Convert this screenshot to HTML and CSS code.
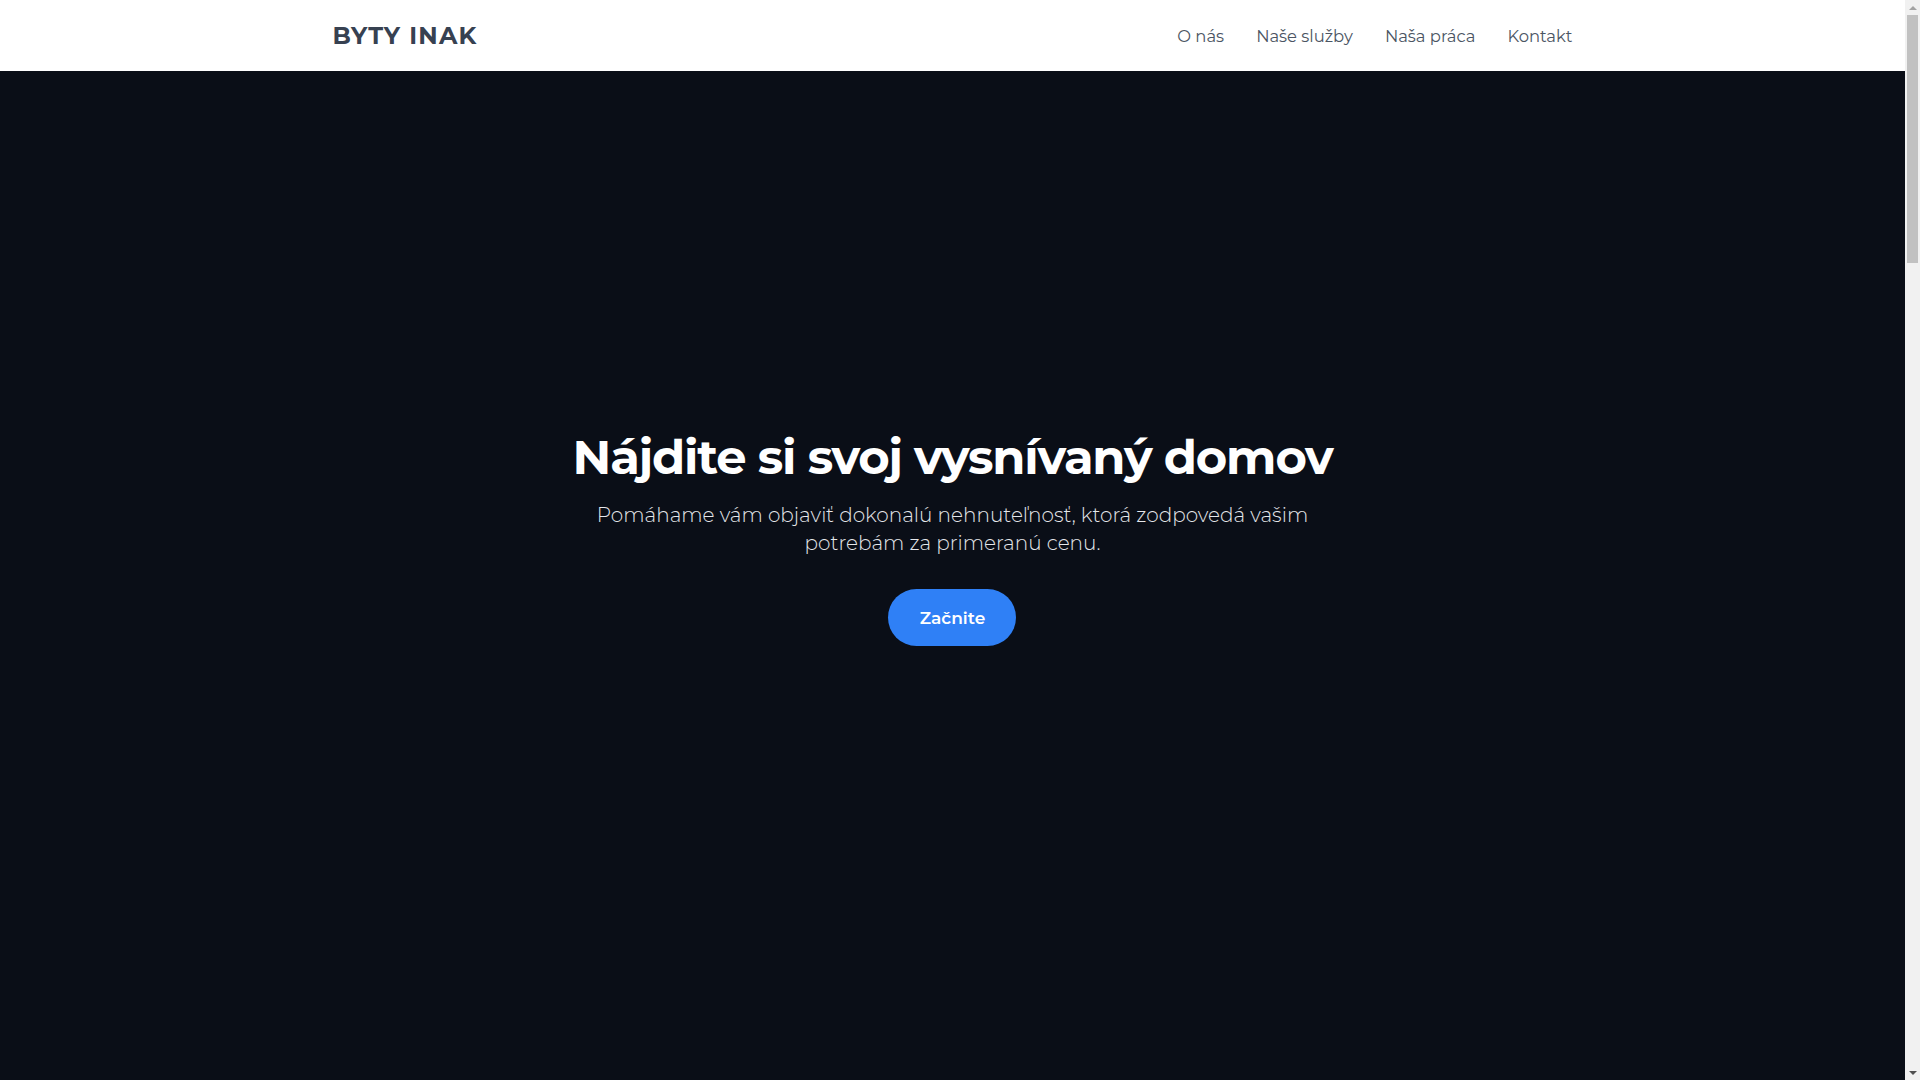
FILE: index.html
```html
<!DOCTYPE html>
<html lang="sk">
<head>
<meta charset="utf-8">
<title>Byty Inak</title>
<link rel="stylesheet" href="styles.css">
</head>
<body>
<header class="site-header">
  <div class="container header-inner">
    <a class="logo" href="#">BYTY INAK</a>
    <nav class="nav">
      <a href="#o-nas">O nás</a>
      <a href="#sluzby">Naše služby</a>
      <a href="#praca">Naša práca</a>
      <a href="#kontakt">Kontakt</a>
    </nav>
  </div>
</header>
<main>
  <section class="hero">
    <div class="hero-content">
      <h1 class="hero-title">Nájdite si svoj vysnívaný domov</h1>
      <p class="hero-text">Pomáhame vám objaviť dokonalú nehnuteľnosť, ktorá zodpovedá vašim<br>potrebám za primeranú cenu.</p>
      <a class="btn" href="#kontakt">Začnite</a>
    </div>
  </section>
</main>
<div class="scrollbar" aria-hidden="true">
  <span class="sb-arrow sb-up"></span>
  <span class="sb-thumb"></span>
  <span class="sb-arrow sb-down"></span>
</div>
</body>
</html>
```

FILE: styles.css
```css
* { box-sizing: border-box; }
html, body { margin: 0; padding: 0; }
html, body { height: 1080px; overflow: hidden; }
body {
  font-family: "Montserrat", "Inter", "Noto Sans", sans-serif;
  background: #ffffff;
  color: #111827;
  padding-right: 15px;
}
a { text-decoration: none; }

.container {
  max-width: 1280px;
  margin: 0 auto;
  padding: 0 20px;
}

.site-header {
  position: fixed;
  top: 0;
  left: 0;
  right: 15px;
  height: 71px;
  background: #ffffff;
  z-index: 10;
}
.header-inner {
  height: 100%;
  display: flex;
  align-items: center;
  justify-content: space-between;
}
.logo {
  font-size: 24px;
  font-weight: 700;
  letter-spacing: 0.05em;
  color: #374151;
}
.nav {
  display: flex;
  gap: 32px;
}
.nav a {
  font-size: 16.4px;
  color: #4b5563;
  font-weight: 400;
}

.hero {
  height: 1080px;
  background: #0a0e17;
  display: flex;
  align-items: center;
  justify-content: center;
  text-align: center;
  padding-bottom: 10px;
}
.hero-content {
  display: flex;
  flex-direction: column;
  align-items: center;
}
.hero-title {
  margin: 0 0 10px;
  font-size: 48px;
  line-height: 67px;
  font-weight: 700;
  color: #ffffff;
  letter-spacing: -0.025em;
}
.hero-text {
  margin: 0 0 32px;
  font-size: 20px;
  line-height: 28px;
  font-weight: 300;
  color: #e5e7eb;
}
.btn {
  display: inline-flex;
  align-items: center;
  justify-content: center;
  width: 128px;
  height: 57px;
  border-radius: 999px;
  background: #2f80f6;
  color: #ffffff;
  font-size: 17px;
  font-weight: 600;
}

.scrollbar {
  position: fixed;
  top: 0;
  right: 0;
  width: 15px;
  height: 1080px;
  background: #f1f1f1;
  display: flex;
  flex-direction: column;
  align-items: center;
}
.sb-arrow {
  width: 15px;
  height: 15px;
  display: flex;
  align-items: center;
  justify-content: center;
}
.sb-arrow::before {
  content: "";
  width: 0;
  height: 0;
  border-left: 4px solid transparent;
  border-right: 4px solid transparent;
}
.sb-up::before { border-bottom: 4px solid #a3a3a3; }
.sb-down { margin-top: auto; }
.sb-down::before { border-top: 4px solid #505050; }
.sb-thumb {
  width: 11px;
  height: 248px;
  background: #c1c1c1;
}
```
